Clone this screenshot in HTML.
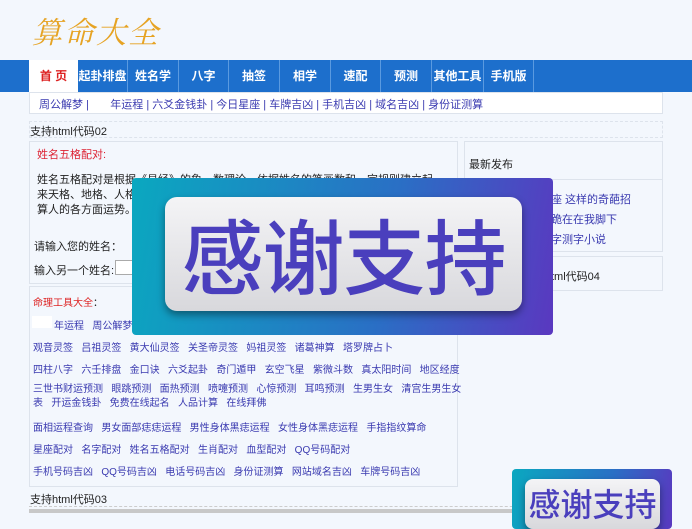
<!DOCTYPE html>
<html><head><meta charset="utf-8"><style>
*{margin:0;padding:0;box-sizing:border-box}
body{width:692px;height:522px;overflow:hidden;background:#f3f7fd;font-family:"Liberation Sans","Noto Sans CJK SC",sans-serif;font-size:11px;color:#222;position:relative}
.a{position:absolute}
.box{position:absolute;border:1px solid #dde3ec;background:#f3f7fd}
a{color:#2323a0;text-decoration:none}
.nav{left:0;top:60px;width:692px;height:32px;background:#1d6fcc}
.nav span{position:absolute;top:0;height:32px;line-height:32px;color:#fff;font-weight:bold;font-size:12px;text-align:center;border-right:1px solid #5a9ae0}
.links{font-size:10px;color:#3a3ab0;white-space:nowrap}
.ov{background:linear-gradient(100deg,#0aa8c0,#2a6fc5 60%,#5a38c0);border-radius:4px}
.btn{background:linear-gradient(180deg,#f4f4f6,#d8d8dc);border-radius:12px;box-shadow:0 4px 8px rgba(0,0,0,.4);color:#4a3fbd;text-align:center;font-family:"Noto Sans CJK SC",sans-serif;font-weight:500}
</style></head><body>
<div class="a" style="left:32px;top:8px;font-size:30px;color:#e6a323;font-family:'Noto Serif CJK SC',serif;letter-spacing:2px;font-style:italic">算命大全</div>
<div class="a nav">
<span style="left:29px;width:49px;background:#fff;color:#d22;border:none">首 页</span>
<span style="left:78px;width:50px">起卦排盘</span>
<span style="left:128px;width:51px">姓名学</span>
<span style="left:179px;width:50px">八字</span>
<span style="left:229px;width:51px">抽签</span>
<span style="left:280px;width:51px">相学</span>
<span style="left:331px;width:50px">速配</span>
<span style="left:381px;width:51px">预测</span>
<span style="left:432px;width:52px">其他工具</span>
<span style="left:484px;width:50px">手机版</span>
</div>
<div class="a" style="left:29px;top:92px;width:634px;height:22px;background:#fff;border:1px solid #dde3ec"></div>
<div class="a links" style="left:39px;top:96px;font-size:11px">周公解梦 |&nbsp;&nbsp;&nbsp;&nbsp;&nbsp;&nbsp; 年运程 | 六爻金钱卦 | 今日星座 | 车牌吉凶 | 手机吉凶 | 域名吉凶 | 身份证测算</div>
<div class="box" style="left:29px;top:121px;width:634px;height:17px;border-style:dashed"></div>
<div class="a" style="left:30px;top:123px;font-size:11px">支持html代码02</div>
<div class="box" style="left:29px;top:141px;width:429px;height:143px"></div>
<div class="a" style="left:37px;top:146px;color:#d23;font-size:11px">姓名五格配对:</div>
<div class="a" style="left:37px;top:173px;width:405px;font-size:11px;line-height:15px">姓名五格配对是根据《易经》的象、数理论，依据姓名的笔画数和一定规则建立起来天格、地格、人格、总格、外格五格数理关系，并运用阴阳五行生克理论，来推算人的各方面运势。</div>
<div class="a" style="left:34px;top:238px;font-size:11px">请输入您的姓名：</div>
<div class="a" style="left:34px;top:262px;font-size:11px">输入另一个姓名:</div>
<div class="a" style="left:115px;top:260px;width:40px;height:15px;background:#fff;border:1px solid #aaa"></div>
<div class="box" style="left:29px;top:286px;width:429px;height:201px"></div>
<div class="a" style="left:33px;top:294px;font-size:10px;color:#d22">命理工具大全<span style="color:#222">：</span></div>
<div class="a" style="left:32px;top:316px;width:20px;height:12px;background:#fff"></div>
<div class="a links" style="left:54px;top:317px">年运程&nbsp;&nbsp; 周公解梦</div>
<div class="a links" style="left:33px;top:339px">观音灵签&nbsp;&nbsp; 吕祖灵签&nbsp;&nbsp; 黄大仙灵签&nbsp;&nbsp; 关圣帝灵签&nbsp;&nbsp; 妈祖灵签&nbsp;&nbsp; 诸葛神算&nbsp;&nbsp; 塔罗牌占卜</div>
<div class="a links" style="left:33px;top:361px">四柱八字&nbsp;&nbsp; 六壬排盘&nbsp;&nbsp; 金口诀&nbsp;&nbsp; 六爻起卦&nbsp;&nbsp; 奇门遁甲&nbsp;&nbsp; 玄空飞星&nbsp;&nbsp; 紫微斗数&nbsp;&nbsp; 真太阳时间&nbsp;&nbsp; 地区经度</div>
<div class="a links" style="left:33px;top:383px;line-height:14px">三世书财运预测&nbsp;&nbsp; 眼跳预测&nbsp;&nbsp; 面热预测&nbsp;&nbsp; 喷嚏预测&nbsp;&nbsp; 心惊预测&nbsp;&nbsp; 耳鸣预测&nbsp;&nbsp; 生男生女&nbsp;&nbsp; 清宫生男生女<br>表&nbsp;&nbsp; 开运金钱卦&nbsp;&nbsp; 免费在线起名&nbsp;&nbsp; 人品计算&nbsp;&nbsp; 在线拜佛</div>
<div class="a links" style="left:33px;top:419px">面相运程查询&nbsp;&nbsp; 男女面部痣痣运程&nbsp;&nbsp; 男性身体黑痣运程&nbsp;&nbsp; 女性身体黑痣运程&nbsp;&nbsp; 手指指纹算命</div>
<div class="a links" style="left:33px;top:441px">星座配对&nbsp;&nbsp; 名字配对&nbsp;&nbsp; 姓名五格配对&nbsp;&nbsp; 生肖配对&nbsp;&nbsp; 血型配对&nbsp;&nbsp; QQ号码配对</div>
<div class="a links" style="left:33px;top:463px">手机号码吉凶&nbsp;&nbsp; QQ号码吉凶&nbsp;&nbsp; 电话号码吉凶&nbsp;&nbsp; 身份证测算&nbsp;&nbsp; 网站域名吉凶&nbsp;&nbsp; 车牌号码吉凶</div>
<div class="a" style="left:30px;top:491px;font-size:11px">支持html代码03</div>
<div class="a" style="left:29px;top:506px;width:634px;height:1px;border-top:1px dashed #ccc"></div>
<div class="a" style="left:29px;top:509px;width:634px;height:4px;background:#c8c8c8"></div>
<div class="box" style="left:464px;top:141px;width:199px;height:111px"></div>
<div class="a" style="left:464px;top:179px;width:199px;height:1px;background:#dde3ec"></div>
<div class="a" style="left:469px;top:156px;font-size:11px">最新发布</div>
<div class="a links" style="left:540px;top:190px;font-size:11px;line-height:20px">星座 这样的奇葩招<br>就跪在在我脚下<br>万字测字小说</div>
<div class="box" style="left:464px;top:256px;width:199px;height:35px"></div>
<div class="a" style="left:551px;top:268px;font-size:11px">tml代码04</div>
<div class="a ov" style="left:132px;top:178px;width:421px;height:157px"></div>
<div class="a btn" style="left:165px;top:197px;width:357px;height:114px;font-size:82px;line-height:112px;letter-spacing:-1px">感谢支持</div>
<div class="a ov" style="left:512px;top:469px;width:160px;height:60px"></div>
<div class="a btn" style="left:525px;top:479px;width:135px;height:50px;font-size:32px;line-height:48px;border-radius:8px">感谢支持</div>
</body></html>
